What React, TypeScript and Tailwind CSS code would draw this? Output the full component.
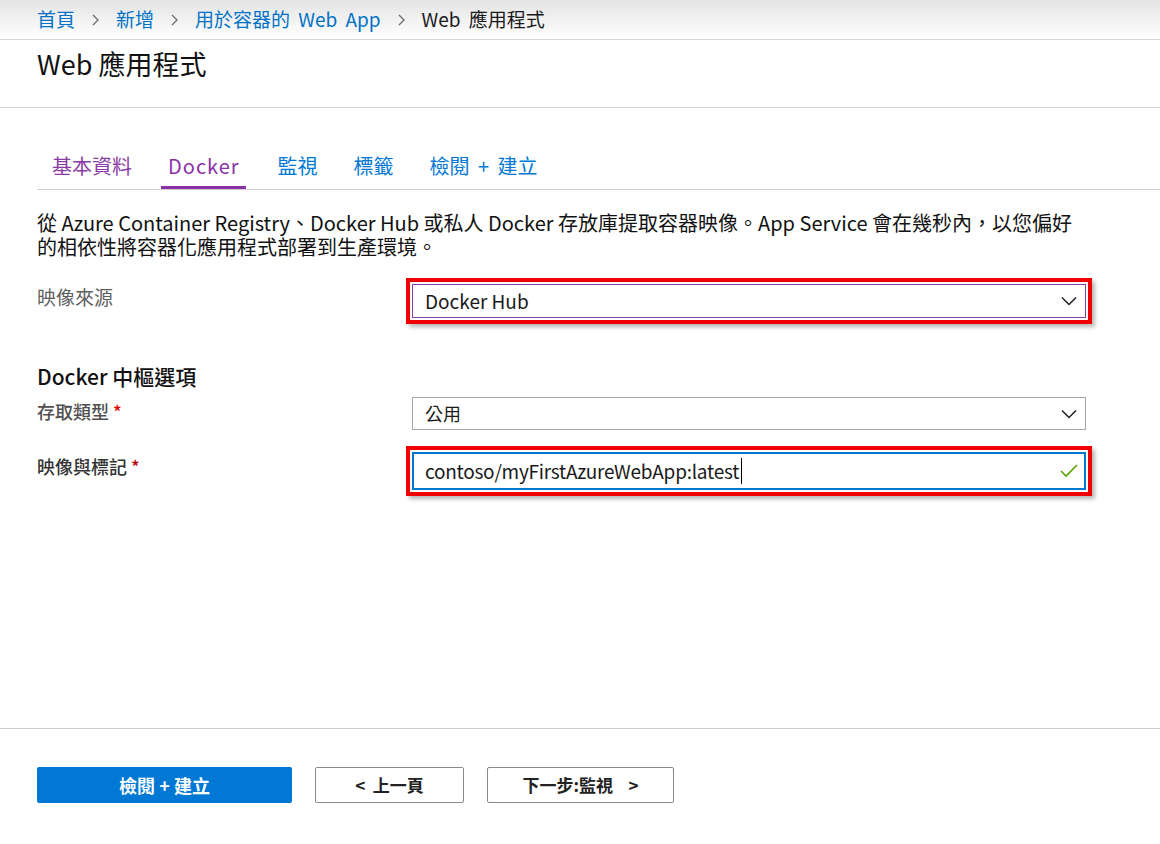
import React from "react";

const Chevron = () => (
  <svg width="7" height="12" viewBox="0 0 7 12" className="shrink-0">
    <polyline points="1,1 6,6 1,11" fill="none" stroke="#6b6b6b" strokeWidth="1.3" />
  </svg>
);

const DownArrow = () => (
  <svg width="16" height="10" viewBox="0 0 16 10">
    <polyline points="1,1.5 8,8.5 15,1.5" fill="none" stroke="#1e1e1e" strokeWidth="1.5" />
  </svg>
);

const CheckMark = () => (
  <svg width="18" height="14" viewBox="0 0 18 14">
    <polyline points="1,7 6,12 17,1" fill="none" stroke="#57a300" strokeWidth="1.6" />
  </svg>
);

const Crumb = ({ text, last }: { text: string; last?: boolean }) => (
  <>
    <span className={last ? "text-[#1a1a1a]" : "text-[#0072c6]"}>{text}</span>
    {!last && <Chevron />}
  </>
);

const Tab = ({ label, state, extra }: { label: string; state: "visited" | "active" | "link"; extra?: string }) => {
  const color =
    state === "link"
      ? "text-[#0078d4] border-transparent"
      : state === "active"
      ? "text-[#8c32a8] border-[#8c32a8]"
      : "text-[#8b3ba5] border-transparent";
  return (
    <div className={`px-[7px] pt-[4px] pb-[6px] leading-[28px] text-[20px] border-b-[3px] ${extra ?? ""} ${color}`}>
      {label}
    </div>
  );
};

const RedBox = ({ children }: { children: React.ReactNode }) => (
  <div className="-ml-[6px] w-[686px] border-[4px] border-[#f00000] p-[2px] bg-white shadow-[3px_3px_4px_rgba(0,0,0,0.28)]">
    {children}
  </div>
);

export default function App() {
  return (
    <div className="h-[844px] flex flex-col bg-white font-['Noto_Sans_CJK_TC','Noto_Sans',sans-serif] text-[#1a1a1a]">
      {/* breadcrumb */}
      <div className="h-[40px] shrink-0 border-b border-[#d6d6d6] bg-gradient-to-b from-[#e4e4e4] to-white flex items-center gap-[17px] pl-[37px] text-[19px] [word-spacing:4px]">
        <Crumb text="首頁" />
        <Crumb text="新增" />
        <Crumb text="用於容器的 Web App" />
        <Crumb text="Web 應用程式" last />
      </div>

      {/* title */}
      <div className="h-[68px] shrink-0 border-b border-[#d6d6d6] pl-[37px] pt-[8px]">
        <h1 className="text-[27px] leading-[32px] text-[#111]">Web 應用程式</h1>
      </div>

      <div className="flex-1 pl-[37px]">
        {/* tabs */}
        <div className="mt-[40px] flex items-end gap-[22px] border-b border-[#cfcfcf] pl-[8px]">
          <Tab label="基本資料" state="visited" />
          <Tab label="Docker" state="active" extra="tracking-[1px] pr-[6px]" />
          <Tab label="監視" state="link" extra="ml-[3px]" />
          <Tab label="標籤" state="link" />
          <Tab label="檢閱 + 建立" state="link" extra="[word-spacing:4px]" />
        </div>

        <p className="mt-[21px] text-[20px] leading-[24px] text-[#111] whitespace-nowrap">
          從 Azure Container Registry、Docker Hub 或私人 Docker 存放庫提取容器映像。App Service 會在幾秒內，以您偏好
          <br />
          的相依性將容器化應用程式部署到生產環境。
        </p>

        {/* image source */}
        <div className="mt-[19px] flex items-start">
          <div className="w-[375px] pt-[7px] text-[19px] leading-[24px] text-[#5e5e5e]">映像來源</div>
          <RedBox>
            <div className="h-[34px] border border-[#8a3ea7] flex items-center justify-between pl-[12px] pr-[8px] text-[19px]">
              <span>Docker Hub</span>
              <DownArrow />
            </div>
          </RedBox>
        </div>

        <h2 className="mt-[38px] text-[21px] leading-[28px] font-medium text-[#111]">Docker 中樞選項</h2>

        {/* access type */}
        <div className="mt-[7px] flex items-start">
          <div className="w-[375px] pt-[2px] text-[18px] leading-[24px] font-medium text-[#505050]">
            存取類型 <span className="text-[#e00000]">*</span>
          </div>
          <div className="w-[674px] h-[33px] border border-[#a6a6a6] flex items-center justify-between pl-[12px] pr-[8px] text-[18px]">
            <span>公用</span>
            <DownArrow />
          </div>
        </div>

        {/* image and tag */}
        <div className="mt-[16px] flex items-start">
          <div className="w-[375px] pt-[8px] text-[18px] leading-[24px] font-medium text-[#333]">
            映像與標記 <span className="text-[#c00000]">*</span>
          </div>
          <RedBox>
            <div className="h-[38px] border-2 border-[#0078d4] flex items-center justify-between pl-[11px] pr-[6px] text-[19px]">
              <span className="flex items-center tracking-[-0.25px]">
                contoso/myFirstAzureWebApp:latest
                <span className="ml-[2px] inline-block w-px h-[26px] bg-black" />
              </span>
              <CheckMark />
            </div>
          </RedBox>
        </div>
      </div>

      {/* footer */}
      <div className="h-[116px] shrink-0 border-t border-[#cccccc] pl-[37px] pt-[38px] flex items-start gap-[23px]">
        <button className="w-[255px] h-[36px] rounded-[2px] bg-[#0078d4] text-white text-[18px] font-bold">檢閱 + 建立</button>
        <button className="w-[149px] h-[36px] rounded-[2px] border border-[#8a8a8a] bg-white text-[#222] text-[17px] font-bold">
          &lt;&nbsp;&nbsp;上一頁
        </button>
        <button className="w-[187px] h-[36px] rounded-[2px] border border-[#8a8a8a] bg-white text-[#222] text-[17px] font-bold">
          下一步:監視&nbsp;&nbsp;&nbsp;&nbsp;&gt;
        </button>
      </div>
    </div>
  );
}
